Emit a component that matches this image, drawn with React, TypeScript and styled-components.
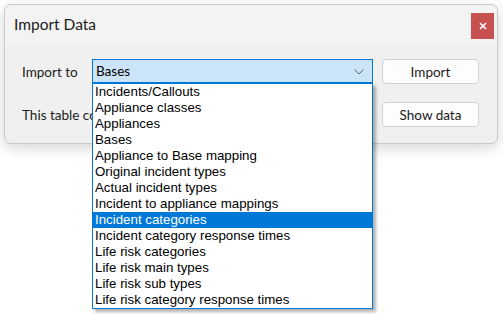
import React from "react";
import styled, { createGlobalStyle } from "styled-components";

const Global = createGlobalStyle`
  html, body { margin: 0; padding: 0; background: #ffffff; }
  body { font-family: "Lato", "Noto Sans", sans-serif; color: #000; }
`;

const Page = styled.div`
  padding: 4px 5px 0 4px;
  width: 503px;
  height: 316px;
  box-sizing: border-box;
  position: relative;
  overflow: hidden;
`;

const Window = styled.div`
  width: 494px;
  height: 140px;
  box-sizing: border-box;
  background: #f0f0f0;
  border: 1px solid #c9c9c9;
  border-radius: 7px;
  box-shadow: 0 4px 14px rgba(0, 0, 0, 0.16);
  display: flex;
  flex-direction: column;
`;

const TitleBar = styled.div`
  height: 40px;
  display: flex;
  align-items: flex-start;
  justify-content: space-between;
  padding: 0 3px 0 9px;
  background: #f3f3f3;
  border-radius: 7px 7px 0 0;
`;

const Title = styled.div`
  font-size: 15.5px;
  line-height: 16px;
  margin-top: 11px;
  color: #1a1a1a;
`;

const CloseButton = styled.div`
  width: 23px;
  height: 26px;
  margin-top: 8px;
  background: #c75050;
  display: flex;
  align-items: center;
  justify-content: center;
`;

const Body = styled.div`
  padding: 14px 18px 0 17px;
  display: flex;
  flex-direction: column;
  gap: 18px;
`;

const Row = styled.div`
  display: flex;
  align-items: center;
  height: 25px;
`;

const Label = styled.div`
  font-size: 13.5px;
  width: 70px;
  white-space: nowrap;
  overflow: hidden;
  color: #1a1a1a;
`;

const Combo = styled.div`
  position: relative;
  width: 281px;
  height: 24px;
  box-sizing: border-box;
  border: 1px solid #0078d7;
  background: #cce4f7;
  display: flex;
  align-items: center;
  padding-left: 3px;
  font-size: 13.5px;
  margin-right: 9px;
  margin-top: -1px;
`;

const Chevron = styled.svg`
  position: absolute;
  right: 8px;
  top: 9px;
`;

const Button = styled.div`
  width: 97px;
  height: 25px;
  box-sizing: border-box;
  border: 1px solid #d0d0d0;
  border-radius: 4px;
  background: #fdfdfd;
  display: flex;
  align-items: center;
  justify-content: center;
  font-size: 13.5px;
  color: #1a1a1a;
`;

const Spacer = styled.div`
  width: 281px;
  margin-right: 9px;
`;

const DropList = styled.ul`
  position: absolute;
  left: 92px;
  top: 83px;
  width: 281px;
  margin: 0;
  padding: 0;
  list-style: none;
  box-sizing: border-box;
  border: 1px solid #0078d7;
  background: #fff;
  box-shadow: 3px 3px 3px rgba(0, 0, 0, 0.3);
  font-family: "Liberation Sans", Arial, sans-serif;
`;

const Item = styled.li<{ $selected?: boolean }>`
  height: 16px;
  line-height: 16px;
  font-size: 13.3px;
  padding-left: 2px;
  white-space: nowrap;
  background: ${(p) => (p.$selected ? "#0078d7" : "transparent")};
  color: ${(p) => (p.$selected ? "#fff" : "#000")};
`;

const items = [
  "Incidents/Callouts",
  "Appliance classes",
  "Appliances",
  "Bases",
  "Appliance to Base mapping",
  "Original incident types",
  "Actual incident types",
  "Incident to appliance mappings",
  "Incident categories",
  "Incident category response times",
  "Life risk categories",
  "Life risk main types",
  "Life risk sub types",
  "Life risk category response times",
];

export default function App() {
  return (
    <Page>
      <Global />
      <Window>
        <TitleBar>
          <Title>Import Data</Title>
          <CloseButton>
            <svg width="8" height="8" viewBox="0 0 8 8">
              <path d="M1 1L7 7M7 1L1 7" stroke="#fff" strokeWidth="1.6" />
            </svg>
          </CloseButton>
        </TitleBar>
        <Body>
          <Row>
            <Label>Import to</Label>
            <Combo>
              Bases
              <Chevron width="10" height="6" viewBox="0 0 10 6">
                <path d="M0.5 0.5L5 5L9.5 0.5" fill="none" stroke="#5f5f5f" strokeWidth="1" />
              </Chevron>
            </Combo>
            <Button>Import</Button>
          </Row>
          <Row>
            <Label>This table contains data</Label>
            <Spacer />
            <Button>Show data</Button>
          </Row>
        </Body>
      </Window>
      <DropList>
        {items.map((t, i) => (
          <Item key={t} $selected={i === 8}>
            {t}
          </Item>
        ))}
      </DropList>
    </Page>
  );
}
